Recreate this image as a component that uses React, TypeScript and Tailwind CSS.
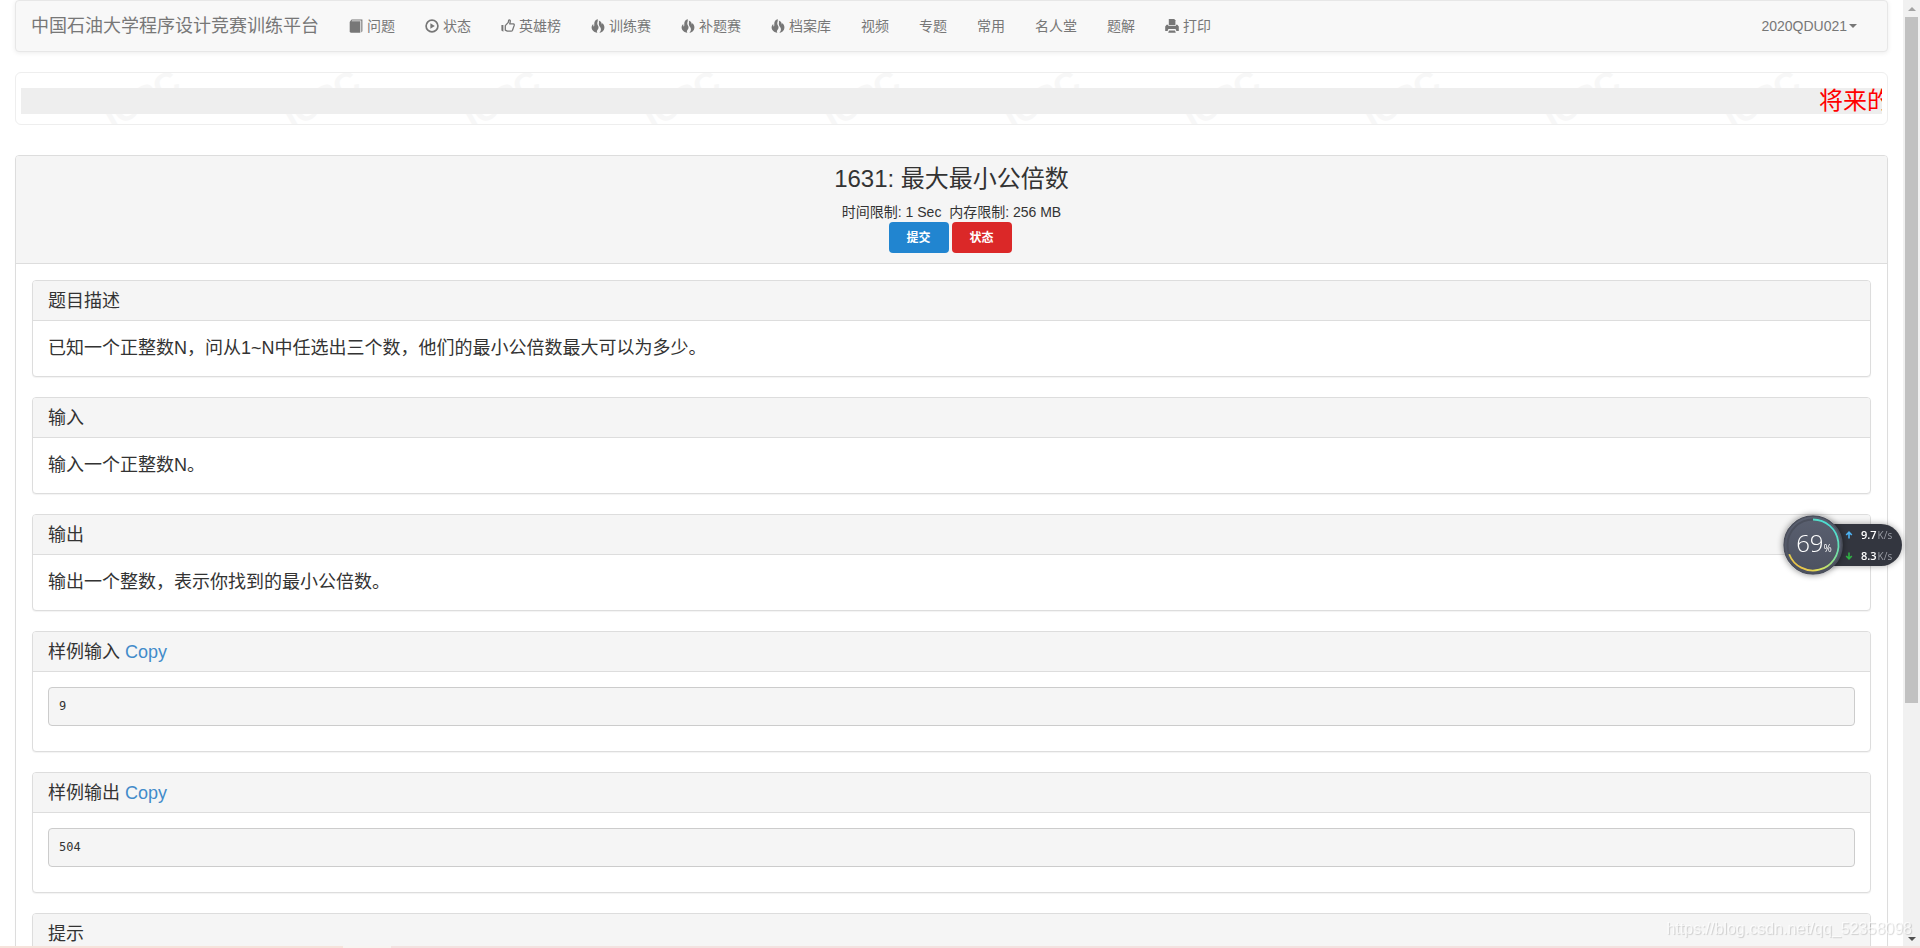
import React from "react";

interface NavItem {
    label: string;
    icon?: keyof typeof ICONS;
}

interface Section {
    title: string;
    text?: string;
    sample?: string;
}

const ICONS = {
    book: (
        <>
            <path d="M1.2 2.2 2.6.5H13.4V12.2L12.3 13.5V1.6H3L2.6 2.2H11.3V13.7H1.9L.7 12.9V2.9Z" fill="currentColor" />
        </>
    ),
    play: (
        <>
            <circle cx="7" cy="7" r="5.9" fill="none" stroke="currentColor" strokeWidth="1.7" />
            <path d="M5.4 4.2 9.8 7 5.4 9.8Z" fill="currentColor" />
        </>
    ),
    thumb: (
        <>
            <path d="M.4 6h2v6.8L.4 11.6Z" fill="currentColor" />
            <path
                d="M4.3 6.6 7.3 3.4 7.7 1.2Q8.4.3 9.2 1.4Q9.5 2.7 8.7 4.9H12.4Q13.5 5.2 13.2 6.4L11.5 11.3Q11.1 12.2 10.2 12.2H6.3L4.3 11.2Z"
                fill="none"
                stroke="currentColor"
                strokeWidth="1.3"
                strokeLinejoin="round"
            />
        </>
    ),
    fire: (
        <>
            <path
                d="M6.6 0C7.2 2.2 6.1 3.4 6.3 5C6.5 6.4 7.9 7.2 7.5 9C7.2 10.4 6 11 5.9 12.2C5.8 12.9 6.1 13.4 6.5 14C3.2 13.4.7 11.4.6 8.6C.6 7 1.3 6 2.2 5C2.3 6 2.3 7 2.8 7.8C3.6 6.6 3.2 5.4 3.3 4C3.5 2.2 4.8.8 6.6 0Z"
                fill="currentColor"
            />
            <path
                d="M7.8 1.4C9.8 2 10.8 3.6 10.8 5.6C11.3 5.2 11.4 4.6 11.3 4C12.7 5.2 13.6 7 13.4 9C13.2 11.4 11.2 13.3 8.4 14C9.6 12.6 10.2 11.2 9.8 9.6C9.5 8.2 8.2 7.4 7.9 5.8C7.6 4.2 8.4 3 7.8 1.4Z"
                fill="currentColor"
            />
        </>
    ),
    print: (
        <>
            <path d="M3.8.6Q3.8 0 4.4 0H9.2L10.4 1.2V6H3.8Z" fill="currentColor" />
            <path d="M.2 7.6 1.6 5.8H3.2V6.8H11V5.8H12.4L13.8 7.6V12H11.4L10.6 10H3.4L2.6 12H.2Z" fill="currentColor" />
            <path d="M4 11.4H10L10.8 13.8H3.2Z" fill="currentColor" />
        </>
    ),
};

const navItems: NavItem[] = [
    { label: "问题", icon: "book" },
    { label: "状态", icon: "play" },
    { label: "英雄榜", icon: "thumb" },
    { label: "训练赛", icon: "fire" },
    { label: "补题赛", icon: "fire" },
    { label: "档案库", icon: "fire" },
    { label: "视频" },
    { label: "专题" },
    { label: "常用" },
    { label: "名人堂" },
    { label: "题解" },
    { label: "打印", icon: "print" },
];

const sections: Section[] = [
    { title: "题目描述", text: "已知一个正整数N，问从1~N中任选出三个数，他们的最小公倍数最大可以为多少。" },
    { title: "输入", text: "输入一个正整数N。" },
    { title: "输出", text: "输出一个整数，表示你找到的最小公倍数。" },
    { title: "样例输入", sample: "9" },
    { title: "样例输出", sample: "504" },
    { title: "提示", text: "" },
];

function Navbar() {
    return (
        <nav className="flex items-center px-[15px] h-[52px] bg-[#f8f8f8] border border-[#e7e7e7] rounded shadow-[0_1px_5px_rgba(0,0,0,0.08)] text-[#777] whitespace-nowrap">
            <a href="#" className="text-[18px] leading-5">中国石油大学程序设计竞赛训练平台</a>
            <ul className="flex ml-[15px] text-sm leading-5">
                {navItems.map((item) => (
                    <li key={item.label}>
                        <a href="#" className="flex items-center gap-1 px-[15px] py-[15px]">
                            {item.icon && (
                                <svg viewBox="0 0 14 14" className="size-3.5" aria-hidden="true">
                                    {ICONS[item.icon]}
                                </svg>
                            )}
                            {item.label}
                        </a>
                    </li>
                ))}
            </ul>
            <button className="flex items-center gap-0.5 ml-auto mr-[15px] text-sm leading-5">
                2020QDU021
                <span className="border-x-4 border-x-transparent border-t-4 border-t-[#777]" />
            </button>
        </nav>
    );
}

function Notice() {
    return (
        <div className="relative mt-5 px-[5px] pt-[15px] pb-[10px] border border-[#eee] rounded-md overflow-hidden">
            {/* Tiled logo behind the marquee */}
            <div className="absolute inset-0 flex pl-9" aria-hidden="true">
                {Array.from({ length: 10 }, (_, i) => (
                    <div key={i} className="w-[180px] shrink-0 flex items-center justify-center">
                        <span className="-rotate-30 text-[34px] leading-8 font-bold text-[#f7f7f7]">ICPC</span>
                    </div>
                ))}
            </div>
            <div className="relative flex justify-end h-[26px] bg-[#eee] overflow-hidden">
                <div className="w-[63px] text-2xl leading-[26px] text-[#f00] whitespace-nowrap overflow-hidden">将来的</div>
            </div>
        </div>
    );
}

function SectionPanel({ title, text, sample }: Section) {
    return (
        <section className="mb-5 bg-white border border-[#ddd] rounded shadow-[0_1px_1px_rgba(0,0,0,0.05)]">
            <h4 className="px-[15px] pt-[10px] pb-2 leading-[21px] text-[18px] bg-[#f5f5f5] border-b border-[#ddd] rounded-t-[3px]">
                {title}
                {sample && <a href="#" className="ml-[5px] text-[#428bca]">Copy</a>}
            </h4>
            {sample ? (
                <div className="px-[15px] pt-[15px] pb-[25px]">
                    <pre className="px-[10px] py-[9px] text-xs leading-[19px] bg-[#f5f5f5] border border-[#ccc] rounded font-['DejaVu_Sans_Mono',monospace]">
                        {sample}
                    </pre>
                </div>
            ) : (
                <p className="p-[15px] min-h-[55px] text-[18px] leading-[25px]">{text}</p>
            )}
        </section>
    );
}

function Problem() {
    return (
        <main className="mt-[30px] border border-[#ddd] rounded shadow-[0_1px_1px_rgba(0,0,0,0.05)]">
            <header className="py-[10px] text-center bg-[#f5f5f5] border-b border-[#ddd] rounded-t-[3px]">
                <h3 className="mb-[10px] text-2xl leading-[26px]">1631: 最大最小公倍数</h3>
                <p className="text-sm leading-5">时间限制: 1 Sec&nbsp; 内存限制: 256 MB</p>
                <div className="flex justify-center">
                    <button className="w-[60px] h-[31px] mr-[3px] rounded bg-[#2185d0] text-white text-xs font-bold">提交</button>
                    <button className="w-[60px] h-[31px] mr-[3px] rounded bg-[#db2828] text-white text-xs font-bold">状态</button>
                </div>
            </header>
            <div className="px-[16px] pt-4">
                {sections.map((s) => (
                    <SectionPanel key={s.title} {...s} />
                ))}
            </div>
        </main>
    );
}

function Scrollbar() {
    return (
        <div className="flex flex-col w-[17px] shrink-0 bg-[#f1f1f1]">
            <div className="flex h-[17px] shrink-0 items-center justify-center">
                <span className="border-x-4 border-x-transparent border-b-4 border-b-[#a3a3a3]" />
            </div>
            <div className="flex-1">
                <div className="mx-0.5 h-3/4 bg-[#c1c1c1]" />
            </div>
            <div className="flex h-[15px] shrink-0 items-center justify-center">
                <span className="border-x-4 border-x-transparent border-t-4 border-t-[#505050]" />
            </div>
        </div>
    );
}

function SpeedMonitor() {
    return (
        <div className="fixed right-[18px] top-[515px] flex items-center font-['Open_Sans','Noto_Sans',sans-serif]">
            <div className="relative z-10 size-[60px] rounded-full shadow-[0_0_6px_rgba(0,0,0,0.45)]">
                <svg viewBox="0 0 60 60" className="absolute inset-0 size-full" aria-hidden="true">
                    <defs>
                        <linearGradient id="disc" x1="0" y1="0" x2="0" y2="1">
                            <stop offset="0" stopColor="#5a6070" />
                            <stop offset="1" stopColor="#4c5160" />
                        </linearGradient>
                        <linearGradient id="ring" x1="0.8" y1="0" x2="0.1" y2="1">
                            <stop offset="0" stopColor="#45dcdc" />
                            <stop offset="0.45" stopColor="#7fe09a" />
                            <stop offset="0.75" stopColor="#dfe25a" />
                            <stop offset="1" stopColor="#f0b040" />
                        </linearGradient>
                    </defs>
                    <circle cx="30" cy="30" r="29" fill="url(#disc)" stroke="#4a4e5a" strokeWidth="1.5" />
                    <circle cx="30" cy="30" r="25.5" fill="none" stroke="#4b505d" strokeWidth="2" />
                    <path d="M30 4.5A25.5 25.5 0 1 1 6.2 39.2" fill="none" stroke="url(#ring)" strokeWidth="1.8" />
                </svg>
                <div className="relative flex h-full items-baseline justify-center pl-0.5 pt-[12px] text-white">
                    <span className="text-2xl leading-8 font-light">69</span>
                    <span className="text-[10px] leading-4">%</span>
                </div>
            </div>
            <div className="flex flex-col -ml-5 h-[42px] w-[79px] pl-[22px] rounded-r-full bg-[#33363f] text-white shadow-[0_0_6px_rgba(0,0,0,0.35)]">
                <SpeedRow value="9.7" color="text-[#4db4f5]" path="M4 7.5V1.5M1.2 4 4 1.2 6.8 4" />
                <SpeedRow value="8.3" color="text-[#2fb344]" path="M4 .5V6.5M1.2 4 4 6.8 6.8 4" />
            </div>
        </div>
    );
}

function SpeedRow({ value, color, path }: { value: string; color: string; path: string }) {
    return (
        <div className="flex flex-1 items-center text-[11px] leading-4">
            <svg viewBox="0 0 8 8" className={`size-2 mr-2 shrink-0 ${color}`} aria-hidden="true">
                <path d={path} fill="none" stroke="currentColor" strokeWidth="1.6" />
            </svg>
            <span className="mr-px font-semibold">{value}</span>
            <span className="text-[10px] text-[#9a9da5]">K/s</span>
        </div>
    );
}

export default function App() {
    return (
        <div className="flex flex-col h-screen overflow-hidden bg-white text-[#333] font-['Liberation_Sans','Noto_Sans_CJK_SC',sans-serif]">
            <div className="flex flex-1 min-h-0">
                <div className="flex-1 min-w-0 px-[15px] overflow-hidden">
                    <Navbar />
                    <Notice />
                    <Problem />
                </div>
                <Scrollbar />
            </div>
            <div className="flex h-0.5 shrink-0">
                <div className="w-[343px] bg-[#f6e3db]" />
                <div className="w-12 bg-[#f8f3ef]" />
                <div className="flex-1 bg-[#f3e2e0]" />
            </div>
            <SpeedMonitor />
            <div className="fixed right-2 bottom-[7px] text-base leading-6 text-white/70 [text-shadow:1px_1px_1px_rgba(0,0,0,0.16)]">
                https://blog.csdn.net/qq_52358098
            </div>
        </div>
    );
}
